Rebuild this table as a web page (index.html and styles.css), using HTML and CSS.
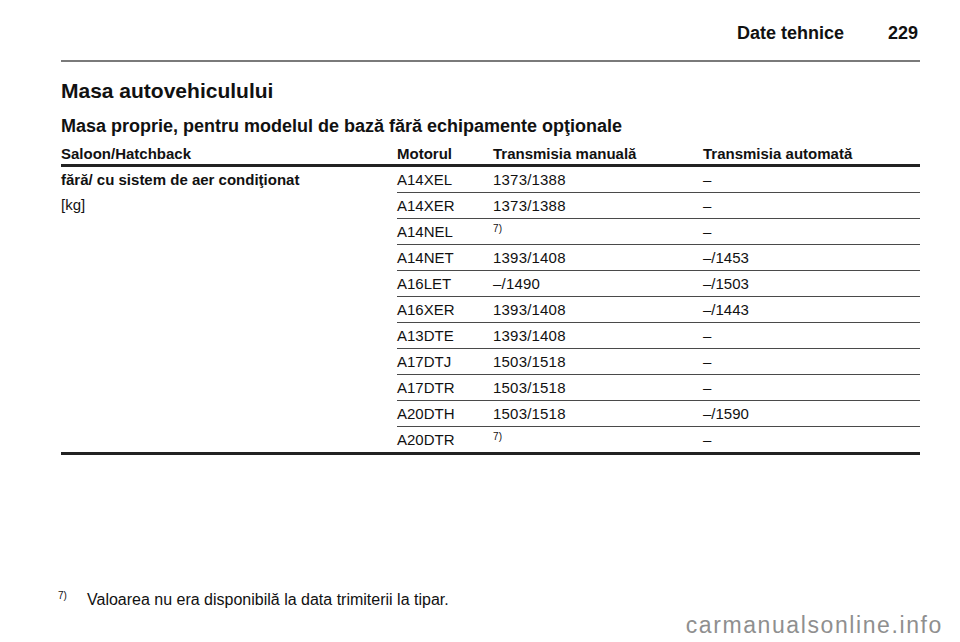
FILE: index.html
```html
<!DOCTYPE html>
<html lang="ro">
<head>
<meta charset="utf-8">
<title>Date tehnice 229</title>
<link rel="stylesheet" href="styles.css">
</head>
<body>
<div class="page">
  <header class="running-head">
    <span class="chapter">Date tehnice</span>
    <span class="pageno">229</span>
  </header>

  <h1 class="title">Masa autovehiculului</h1>
  <h2 class="subtitle">Masa proprie, pentru modelul de bază fără echipamente opţionale</h2>

  <div class="table">
    <div class="thead">
      <div class="c1">Saloon/Hatchback</div>
      <div class="c2">Motorul</div>
      <div class="c3">Transmisia manuală</div>
      <div class="c4">Transmisia automată</div>
    </div>
    <div class="tbody">
      <div class="left">
        <div class="lline strong">fără/ cu sistem de aer condiţionat</div>
        <div class="lline">[kg]</div>
      </div>
      <div class="rows">
        <div class="row"><div class="c2">A14XEL</div><div class="c3">1373/1388</div><div class="c4">–</div></div>
        <div class="row"><div class="c2">A14XER</div><div class="c3">1373/1388</div><div class="c4">–</div></div>
        <div class="row"><div class="c2">A14NEL</div><div class="c3"><span class="sup">7)</span></div><div class="c4">–</div></div>
        <div class="row"><div class="c2">A14NET</div><div class="c3">1393/1408</div><div class="c4">–/1453</div></div>
        <div class="row"><div class="c2">A16LET</div><div class="c3">–/1490</div><div class="c4">–/1503</div></div>
        <div class="row"><div class="c2">A16XER</div><div class="c3">1393/1408</div><div class="c4">–/1443</div></div>
        <div class="row"><div class="c2">A13DTE</div><div class="c3">1393/1408</div><div class="c4">–</div></div>
        <div class="row"><div class="c2">A17DTJ</div><div class="c3">1503/1518</div><div class="c4">–</div></div>
        <div class="row"><div class="c2">A17DTR</div><div class="c3">1503/1518</div><div class="c4">–</div></div>
        <div class="row"><div class="c2">A20DTH</div><div class="c3">1503/1518</div><div class="c4">–/1590</div></div>
        <div class="row last"><div class="c2">A20DTR</div><div class="c3"><span class="sup">7)</span></div><div class="c4">–</div></div>
      </div>
    </div>
  </div>

  <div class="footnote">
    <span class="fn-mark">7)</span>
    <span class="fn-text">Valoarea nu era disponibilă la data trimiterii la tipar.</span>
  </div>

  <div class="watermark">carmanualsonline.info</div>
</div>
</body>
</html>
```

FILE: styles.css
```css
html, body {
  margin: 0;
  padding: 0;
  background: #ffffff;
}

body {
  font-family: "Liberation Sans", Arial, sans-serif;
  color: #111111;
}

.page {
  position: relative;
  width: 960px;
  height: 642px;
  box-sizing: border-box;
  padding: 0 40px 0 61px;
  overflow: hidden;
}

.running-head {
  display: flex;
  justify-content: flex-end;
  align-items: baseline;
  gap: 44px;
  padding-top: 22px;
  padding-bottom: 16px;
  padding-right: 2px;
  border-bottom: 2px solid #7a7a7a;
  font-size: 18px;
  line-height: 22px;
  font-weight: bold;
}

.title {
  margin: 17px 0 0;
  font-size: 21px;
  line-height: 24px;
  font-weight: bold;
}

.subtitle {
  margin: 12px 0 0;
  font-size: 18px;
  line-height: 22px;
  font-weight: bold;
}

.table {
  margin-top: 8px;
  font-size: 15px;
  border-bottom: 3px solid #222222;
}

.thead {
  display: flex;
  font-weight: bold;
  line-height: 18px;
  padding-bottom: 1px;
  border-bottom: 3px solid #222222;
}

.c1 { width: 336px; }
.c2 { width: 96px; }
.c3 { width: 210px; }
.c4 { flex: 1; }

.tbody {
  display: flex;
}

.left {
  width: 336px;
}

.lline {
  line-height: 26px;
  height: 26px;
}

.lline:first-child {
  height: 25px;
  line-height: 25px;
}

.strong {
  font-weight: bold;
}

.rows {
  flex: 1;
}

.row {
  display: flex;
  height: 25px;
  line-height: 25px;
  border-bottom: 1px solid #4a4a4a;
}

.row .c3 {
  letter-spacing: 0.2px;
}

.row.last {
  border-bottom: none;
}

.sup {
  font-size: 10px;
  line-height: 10px;
  vertical-align: 5px;
}

.footnote {
  display: flex;
  margin-top: 135px;
  margin-left: -3px;
  font-size: 16px;
  line-height: 19px;
}

.fn-mark {
  width: 29px;
  font-size: 10px;
  line-height: 10px;
  padding-top: 1px;
}

.watermark {
  position: absolute;
  right: 17px;
  bottom: 4px;
  font-size: 23px;
  line-height: 26px;
  letter-spacing: 1.6px;
  color: #8f8f8f;
}
```
